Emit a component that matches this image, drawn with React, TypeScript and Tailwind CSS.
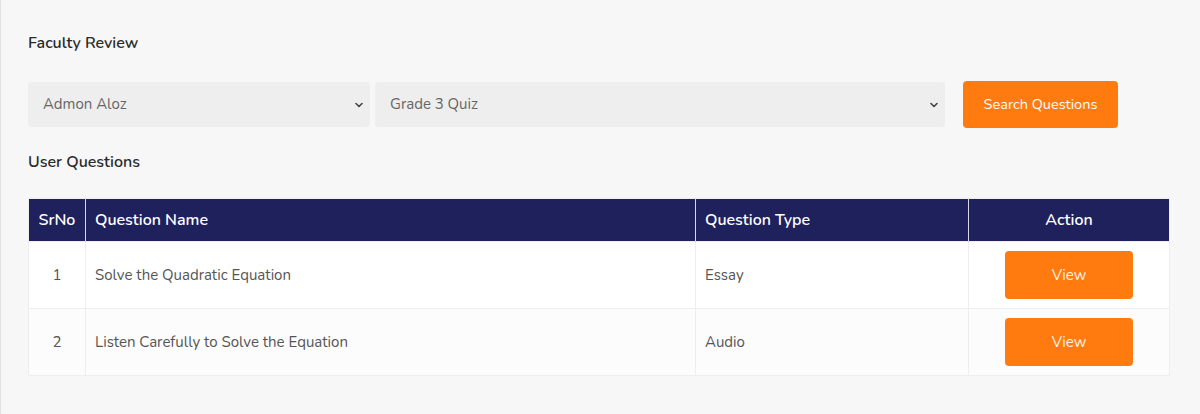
import React from "react";

const Chevron = () => (
  <svg width="8" height="6" viewBox="0 0 8 6" fill="none">
    <path d="M1 1.5l3 3 3-3" stroke="#444" strokeWidth="1.6" strokeLinecap="round" strokeLinejoin="round" />
  </svg>
);

const rows = [
  { n: 1, name: "Solve the Quadratic Equation", type: "Essay" },
  { n: 2, name: "Listen Carefully to Solve the Equation", type: "Audio" },
];

export default function App() {
  return (
    <div
      className="w-[1200px] h-[414px] bg-[#f7f7f7] border-l border-[#e2e2e2] pl-[27px] pr-[31px] pt-[31px] text-[#555]"
      style={{ fontFamily: '"Nunito", "Open Sans", "Noto Sans", sans-serif' }}
    >
      <h2 className="text-[16px] font-semibold text-[#2a2a2a] leading-[24px]">Faculty Review</h2>
      <div className="mt-[26px] flex items-center">
        <div className="w-[342px] h-[45px] rounded-[4px] bg-[#eeeeee] flex items-center justify-between pl-[15px] pr-[7px] text-[15px] text-[#666]">
          <span>Admon Aloz</span>
          <Chevron />
        </div>
        <div className="ml-[5px] w-[570px] h-[45px] rounded-[4px] bg-[#eeeeee] flex items-center justify-between pl-[15px] pr-[7px] text-[15px] text-[#666]">
          <span>Grade 3 Quiz</span>
          <Chevron />
        </div>
        <button className="ml-[18px] w-[155px] h-[47px] rounded-[4px] bg-[#ff7b10] text-white text-[14.5px]">
          Search Questions
        </button>
      </div>
      <h2 className="mt-[22px] text-[16px] font-semibold text-[#2a2a2a] leading-[24px]">User Questions</h2>
      <table className="mt-[24px] w-[1141px] border-collapse border border-[#eeeeee] text-[15px] table-fixed">
        <colgroup>
          <col className="w-[57px]" />
          <col className="w-[610px]" />
          <col className="w-[273px]" />
          <col className="w-[201px]" />
        </colgroup>
        <thead>
          <tr className="bg-[#1f215c] text-white h-[43px] text-[16px]">
            <th className="font-semibold text-center border-r border-[#d6d6e6] px-0">SrNo</th>
            <th className="font-semibold text-left pl-[9px] border-r border-[#d6d6e6]">Question Name</th>
            <th className="font-semibold text-left pl-[9px] border-r border-[#d6d6e6]">Question Type</th>
            <th className="font-semibold text-center">Action</th>
          </tr>
        </thead>
        <tbody>
          {rows.map((r, i) => (
            <tr key={r.n} className={`h-[67px] border-t border-[#eeeeee] ${i % 2 === 0 ? "bg-white" : "bg-[#fcfcfc]"}`}>
              <td className="text-center border-r border-[#eeeeee]">{r.n}</td>
              <td className="pl-[9px] border-r border-[#eeeeee]">{r.name}</td>
              <td className="pl-[9px] border-r border-[#eeeeee]">{r.type}</td>
              <td className="text-center">
                <button className="w-[128px] h-[48px] rounded-[4px] bg-[#ff7b10] text-[#fff3e8] text-[15px]">View</button>
              </td>
            </tr>
          ))}
        </tbody>
      </table>
    </div>
  );
}
